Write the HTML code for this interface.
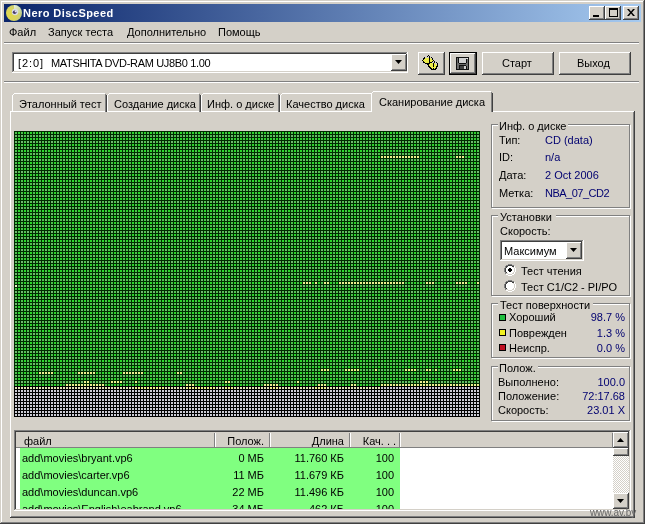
<!DOCTYPE html><html><head><meta charset="utf-8"><style>
html,body{margin:0;padding:0;}
body{width:645px;height:524px;position:relative;overflow:hidden;background:#D4D0C8;font-family:"Liberation Sans",sans-serif;font-size:11px;}
body>div,body>svg{position:absolute;}
.t{white-space:pre;line-height:13px;will-change:transform;}
</style></head><body>
<div style="left:0px;top:0px;width:645px;height:524px;background:#404040;"></div>
<div style="left:0px;top:0px;width:644px;height:523px;background:#D4D0C8;"></div>
<div style="left:1px;top:1px;width:643px;height:522px;background:#808080;"></div>
<div style="left:1px;top:1px;width:642px;height:521px;background:#fff;"></div>
<div style="left:2px;top:2px;width:641px;height:520px;background:#D4D0C8;"></div>
<div style="left:4px;top:4px;width:637px;height:18px;background:linear-gradient(to right,#0A246A,#A6CAF0);"></div>
<svg style="left:5px;top:4px" width="18" height="18" viewBox="0 0 18 18">
<defs><radialGradient id="dg" cx="0.3" cy="0.6" r="0.75"><stop offset="0" stop-color="#e0d848"/><stop offset="0.55" stop-color="#d8d460"/><stop offset="1" stop-color="#b8c890"/></radialGradient>
<linearGradient id="dh" x1="0" y1="0" x2="1" y2="1"><stop offset="0" stop-color="#f0f8f0" stop-opacity="0.9"/><stop offset="1" stop-color="#c8e0c8" stop-opacity="0.2"/></linearGradient></defs>
<circle cx="9" cy="9" r="8" fill="url(#dg)"/>
<path d="M9 1 A8 8 0 0 1 17 9 L12 9 A3 3 0 0 0 9 6 Z" fill="url(#dh)"/>
<circle cx="10" cy="8" r="3.2" fill="#d8dce8"/><circle cx="9.6" cy="8.2" r="1.8" fill="#4a3a68"/><circle cx="10.4" cy="7.6" r="0.8" fill="#e8e8f0"/>
</svg>
<div class="t" style="left:23px;top:7px;color:#fff;font-weight:bold;letter-spacing:0.45px;">Nero DiscSpeed</div>
<div style="left:589px;top:6px;width:16px;height:14px;background:#404040;"></div>
<div style="left:589px;top:6px;width:15px;height:13px;background:#fff;"></div>
<div style="left:590px;top:7px;width:14px;height:12px;background:#808080;"></div>
<div style="left:590px;top:7px;width:13px;height:11px;background:#D4D0C8;"></div>
<div style="left:605px;top:6px;width:16px;height:14px;background:#404040;"></div>
<div style="left:605px;top:6px;width:15px;height:13px;background:#fff;"></div>
<div style="left:606px;top:7px;width:14px;height:12px;background:#808080;"></div>
<div style="left:606px;top:7px;width:13px;height:11px;background:#D4D0C8;"></div>
<div style="left:623px;top:6px;width:16px;height:14px;background:#404040;"></div>
<div style="left:623px;top:6px;width:15px;height:13px;background:#fff;"></div>
<div style="left:624px;top:7px;width:14px;height:12px;background:#808080;"></div>
<div style="left:624px;top:7px;width:13px;height:11px;background:#D4D0C8;"></div>
<div style="left:593px;top:15px;width:6px;height:2px;background:#000;"></div>
<div style="left:609px;top:8px;width:9px;height:9px;background:transparent;border:1px solid #000;border-top-width:2px;box-sizing:border-box;"></div>
<svg style="left:627px;top:9px" width="8" height="7" viewBox="0 0 8 7"><path d="M0 0h2l2 2.5L6 0h2L5 3.5 8 7H6L4 4.5 2 7H0l3-3.5z" fill="#000"/></svg>
<div class="t" style="left:9px;top:26px;color:#000;">Файл</div>
<div class="t" style="left:48px;top:26px;color:#000;">Запуск теста</div>
<div class="t" style="left:127px;top:26px;color:#000;">Дополнительно</div>
<div class="t" style="left:218px;top:26px;color:#000;">Помощь</div>
<div style="left:4px;top:42px;width:635px;height:1px;background:#808080;"></div>
<div style="left:4px;top:43px;width:635px;height:1px;background:#fff;"></div>
<div style="left:12px;top:52px;width:396px;height:21px;background:#fff;"></div>
<div style="left:12px;top:52px;width:395px;height:20px;background:#808080;"></div>
<div style="left:13px;top:53px;width:394px;height:19px;background:#D4D0C8;"></div>
<div style="left:13px;top:53px;width:393px;height:18px;background:#404040;"></div>
<div style="left:14px;top:54px;width:392px;height:17px;background:#fff;"></div>
<div class="t" style="left:18px;top:57px;color:#000;letter-spacing:0.9px;">[2:0]</div>
<div class="t" style="left:51px;top:57px;color:#000;letter-spacing:-0.33px;">MATSHITA DVD-RAM UJ8B0 1.00</div>
<div style="left:391px;top:54px;width:16px;height:17px;background:#404040;"></div>
<div style="left:391px;top:54px;width:15px;height:16px;background:#fff;"></div>
<div style="left:392px;top:55px;width:14px;height:15px;background:#808080;"></div>
<div style="left:392px;top:55px;width:13px;height:14px;background:#D4D0C8;"></div>
<svg style="left:395px;top:60px" width="7" height="4"><path d="M0 0h7L3.5 4z" fill="#000"/></svg>
<div style="left:418px;top:52px;width:27px;height:23px;background:#404040;"></div>
<div style="left:418px;top:52px;width:26px;height:22px;background:#fff;"></div>
<div style="left:419px;top:53px;width:25px;height:21px;background:#808080;"></div>
<div style="left:419px;top:53px;width:24px;height:20px;background:#D4D0C8;"></div>
<svg style="left:422px;top:54px" width="18" height="17" shape-rendering="crispEdges"><rect x="6" y="1" width="1" height="1" fill="#000"/><rect x="5" y="2" width="1" height="1" fill="#000"/><rect x="7" y="2" width="1" height="1" fill="#000"/><rect x="2" y="3" width="1" height="1" fill="#000"/><rect x="7" y="3" width="1" height="1" fill="#000"/><rect x="9" y="3" width="1" height="1" fill="#000"/><rect x="1" y="4" width="2" height="1" fill="#000"/><rect x="3" y="4" width="4" height="1" fill="#ECEC48"/><rect x="7" y="4" width="1" height="1" fill="#000"/><rect x="8" y="4" width="1" height="1" fill="#ECEC48"/><rect x="10" y="4" width="1" height="1" fill="#000"/><rect x="1" y="5" width="1" height="1" fill="#000"/><rect x="2" y="5" width="5" height="1" fill="#ECEC48"/><rect x="7" y="5" width="1" height="1" fill="#000"/><rect x="8" y="5" width="2" height="1" fill="#ECEC48"/><rect x="10" y="5" width="1" height="1" fill="#000"/><rect x="0" y="6" width="1" height="1" fill="#000"/><rect x="1" y="6" width="6" height="1" fill="#ECEC48"/><rect x="7" y="6" width="1" height="1" fill="#000"/><rect x="8" y="6" width="3" height="1" fill="#ECEC48"/><rect x="11" y="6" width="1" height="1" fill="#000"/><rect x="1" y="7" width="1" height="1" fill="#000"/><rect x="2" y="7" width="5" height="1" fill="#ECEC48"/><rect x="7" y="7" width="1" height="1" fill="#000"/><rect x="8" y="7" width="2" height="1" fill="#ECEC48"/><rect x="10" y="7" width="1" height="1" fill="#000"/><rect x="12" y="7" width="1" height="1" fill="#000"/><rect x="1" y="8" width="2" height="1" fill="#000"/><rect x="3" y="8" width="4" height="1" fill="#ECEC48"/><rect x="7" y="8" width="3" height="1" fill="#000"/><rect x="12" y="8" width="1" height="1" fill="#000"/><rect x="14" y="8" width="1" height="1" fill="#000"/><rect x="3" y="9" width="5" height="1" fill="#000"/><rect x="8" y="9" width="3" height="1" fill="#ECEC48"/><rect x="11" y="9" width="1" height="1" fill="#000"/><rect x="12" y="9" width="1" height="1" fill="#ECEC48"/><rect x="15" y="9" width="1" height="1" fill="#000"/><rect x="5" y="10" width="2" height="1" fill="#000"/><rect x="7" y="10" width="4" height="1" fill="#ECEC48"/><rect x="11" y="10" width="1" height="1" fill="#000"/><rect x="12" y="10" width="2" height="1" fill="#ECEC48"/><rect x="15" y="10" width="1" height="1" fill="#000"/><rect x="6" y="11" width="1" height="1" fill="#000"/><rect x="7" y="11" width="4" height="1" fill="#ECEC48"/><rect x="11" y="11" width="1" height="1" fill="#000"/><rect x="12" y="11" width="3" height="1" fill="#ECEC48"/><rect x="15" y="11" width="1" height="1" fill="#000"/><rect x="6" y="12" width="2" height="1" fill="#000"/><rect x="8" y="12" width="3" height="1" fill="#ECEC48"/><rect x="11" y="12" width="1" height="1" fill="#000"/><rect x="12" y="12" width="2" height="1" fill="#ECEC48"/><rect x="14" y="12" width="2" height="1" fill="#000"/><rect x="7" y="13" width="2" height="1" fill="#000"/><rect x="9" y="13" width="5" height="1" fill="#ECEC48"/><rect x="14" y="13" width="1" height="1" fill="#000"/><rect x="8" y="14" width="2" height="1" fill="#000"/><rect x="10" y="14" width="1" height="1" fill="#ECEC48"/><rect x="11" y="14" width="1" height="1" fill="#000"/><rect x="12" y="14" width="1" height="1" fill="#ECEC48"/><rect x="13" y="14" width="2" height="1" fill="#000"/><rect x="9" y="15" width="5" height="1" fill="#000"/></svg>
<div style="left:449px;top:52px;width:28px;height:23px;background:#000;"></div>
<div style="left:450px;top:53px;width:26px;height:21px;background:#404040;"></div>
<div style="left:450px;top:53px;width:25px;height:20px;background:#fff;"></div>
<div style="left:451px;top:54px;width:24px;height:19px;background:#808080;"></div>
<div style="left:451px;top:54px;width:23px;height:18px;background:#D4D0C8;"></div>
<svg style="left:456px;top:57px" width="13" height="13" shape-rendering="crispEdges"><rect x="0" y="0" width="13" height="1" fill="#101010"/><rect x="0" y="1" width="1" height="1" fill="#101010"/><rect x="1" y="1" width="1" height="1" fill="#6c6c6c"/><rect x="2" y="1" width="1" height="1" fill="#101010"/><rect x="3" y="1" width="8" height="1" fill="#d0d0d0"/><rect x="11" y="1" width="1" height="1" fill="#f0f0f0"/><rect x="12" y="1" width="1" height="1" fill="#101010"/><rect x="0" y="2" width="1" height="1" fill="#101010"/><rect x="1" y="2" width="1" height="1" fill="#6c6c6c"/><rect x="2" y="2" width="1" height="1" fill="#101010"/><rect x="3" y="2" width="7" height="1" fill="#d0d0d0"/><rect x="10" y="2" width="1" height="1" fill="#101010"/><rect x="11" y="2" width="1" height="1" fill="#6c6c6c"/><rect x="12" y="2" width="1" height="1" fill="#101010"/><rect x="0" y="3" width="1" height="1" fill="#101010"/><rect x="1" y="3" width="1" height="1" fill="#6c6c6c"/><rect x="2" y="3" width="1" height="1" fill="#101010"/><rect x="3" y="3" width="7" height="1" fill="#d0d0d0"/><rect x="10" y="3" width="1" height="1" fill="#101010"/><rect x="11" y="3" width="1" height="1" fill="#6c6c6c"/><rect x="12" y="3" width="1" height="1" fill="#101010"/><rect x="0" y="4" width="1" height="1" fill="#101010"/><rect x="1" y="4" width="1" height="1" fill="#6c6c6c"/><rect x="2" y="4" width="1" height="1" fill="#101010"/><rect x="3" y="4" width="7" height="1" fill="#d0d0d0"/><rect x="10" y="4" width="1" height="1" fill="#101010"/><rect x="11" y="4" width="1" height="1" fill="#6c6c6c"/><rect x="12" y="4" width="1" height="1" fill="#101010"/><rect x="0" y="5" width="1" height="1" fill="#101010"/><rect x="1" y="5" width="1" height="1" fill="#6c6c6c"/><rect x="2" y="5" width="1" height="1" fill="#101010"/><rect x="3" y="5" width="7" height="1" fill="#d0d0d0"/><rect x="10" y="5" width="1" height="1" fill="#101010"/><rect x="11" y="5" width="1" height="1" fill="#6c6c6c"/><rect x="12" y="5" width="1" height="1" fill="#101010"/><rect x="0" y="6" width="1" height="1" fill="#101010"/><rect x="1" y="6" width="2" height="1" fill="#6c6c6c"/><rect x="3" y="6" width="7" height="1" fill="#101010"/><rect x="10" y="6" width="2" height="1" fill="#6c6c6c"/><rect x="12" y="6" width="1" height="1" fill="#101010"/><rect x="0" y="7" width="1" height="1" fill="#101010"/><rect x="1" y="7" width="11" height="1" fill="#6c6c6c"/><rect x="12" y="7" width="1" height="1" fill="#101010"/><rect x="0" y="8" width="1" height="1" fill="#101010"/><rect x="1" y="8" width="2" height="1" fill="#6c6c6c"/><rect x="3" y="8" width="7" height="1" fill="#101010"/><rect x="10" y="8" width="2" height="1" fill="#6c6c6c"/><rect x="12" y="8" width="1" height="1" fill="#101010"/><rect x="0" y="9" width="1" height="1" fill="#101010"/><rect x="1" y="9" width="2" height="1" fill="#6c6c6c"/><rect x="3" y="9" width="1" height="1" fill="#101010"/><rect x="4" y="9" width="4" height="1" fill="#404040"/><rect x="8" y="9" width="2" height="1" fill="#d0d0d0"/><rect x="10" y="9" width="1" height="1" fill="#101010"/><rect x="11" y="9" width="1" height="1" fill="#6c6c6c"/><rect x="12" y="9" width="1" height="1" fill="#101010"/><rect x="0" y="10" width="1" height="1" fill="#101010"/><rect x="1" y="10" width="2" height="1" fill="#6c6c6c"/><rect x="3" y="10" width="1" height="1" fill="#101010"/><rect x="4" y="10" width="4" height="1" fill="#404040"/><rect x="8" y="10" width="2" height="1" fill="#d0d0d0"/><rect x="10" y="10" width="1" height="1" fill="#101010"/><rect x="11" y="10" width="1" height="1" fill="#6c6c6c"/><rect x="12" y="10" width="1" height="1" fill="#101010"/><rect x="0" y="11" width="1" height="1" fill="#101010"/><rect x="1" y="11" width="2" height="1" fill="#6c6c6c"/><rect x="3" y="11" width="1" height="1" fill="#101010"/><rect x="4" y="11" width="4" height="1" fill="#404040"/><rect x="8" y="11" width="2" height="1" fill="#d0d0d0"/><rect x="10" y="11" width="1" height="1" fill="#101010"/><rect x="11" y="11" width="1" height="1" fill="#6c6c6c"/><rect x="12" y="11" width="1" height="1" fill="#101010"/><rect x="0" y="12" width="13" height="1" fill="#101010"/></svg>
<div style="left:482px;top:52px;width:72px;height:23px;background:#404040;"></div>
<div style="left:482px;top:52px;width:71px;height:22px;background:#fff;"></div>
<div style="left:483px;top:53px;width:70px;height:21px;background:#808080;"></div>
<div style="left:483px;top:53px;width:69px;height:20px;background:#D4D0C8;"></div>
<div class="t" style="left:502px;top:57px;color:#000;">Старт</div>
<div style="left:559px;top:52px;width:72px;height:23px;background:#404040;"></div>
<div style="left:559px;top:52px;width:71px;height:22px;background:#fff;"></div>
<div style="left:560px;top:53px;width:70px;height:21px;background:#808080;"></div>
<div style="left:560px;top:53px;width:69px;height:20px;background:#D4D0C8;"></div>
<div class="t" style="left:577px;top:57px;color:#000;">Выход</div>
<div style="left:4px;top:81px;width:635px;height:1px;background:#808080;"></div>
<div style="left:4px;top:82px;width:635px;height:1px;background:#fff;"></div>
<div style="left:10px;top:111px;width:625px;height:407px;background:#404040;"></div>
<div style="left:10px;top:111px;width:624px;height:406px;background:#fff;"></div>
<div style="left:11px;top:112px;width:623px;height:405px;background:#808080;"></div>
<div style="left:11px;top:112px;width:622px;height:404px;background:#D4D0C8;"></div>
<div style="left:12px;top:95px;width:1px;height:17px;background:#fff;"></div>
<div style="left:13px;top:94px;width:1px;height:1px;background:#fff;"></div>
<div style="left:14px;top:93px;width:91px;height:1px;background:#fff;"></div>
<div style="left:105px;top:94px;width:1px;height:18px;background:#808080;"></div>
<div style="left:106px;top:95px;width:1px;height:17px;background:#404040;"></div>
<div class="t" style="left:19px;top:98px;color:#000;">Эталонный тест</div>
<div style="left:107px;top:95px;width:1px;height:17px;background:#fff;"></div>
<div style="left:108px;top:94px;width:1px;height:1px;background:#fff;"></div>
<div style="left:109px;top:93px;width:90px;height:1px;background:#fff;"></div>
<div style="left:199px;top:94px;width:1px;height:18px;background:#808080;"></div>
<div style="left:200px;top:95px;width:1px;height:17px;background:#404040;"></div>
<div class="t" style="left:114px;top:98px;color:#000;">Создание диска</div>
<div style="left:201px;top:95px;width:1px;height:17px;background:#fff;"></div>
<div style="left:202px;top:94px;width:1px;height:1px;background:#fff;"></div>
<div style="left:203px;top:93px;width:75px;height:1px;background:#fff;"></div>
<div style="left:278px;top:94px;width:1px;height:18px;background:#808080;"></div>
<div style="left:279px;top:95px;width:1px;height:17px;background:#404040;"></div>
<div class="t" style="left:207px;top:98px;color:#000;">Инф. о диске</div>
<div style="left:280px;top:95px;width:1px;height:17px;background:#fff;"></div>
<div style="left:281px;top:94px;width:1px;height:1px;background:#fff;"></div>
<div style="left:282px;top:93px;width:89px;height:1px;background:#fff;"></div>
<div style="left:371px;top:94px;width:1px;height:18px;background:#808080;"></div>
<div style="left:372px;top:95px;width:1px;height:17px;background:#404040;"></div>
<div class="t" style="left:286px;top:98px;color:#000;">Качество диска</div>
<div style="left:371px;top:91px;width:122px;height:22px;background:#D4D0C8;"></div>
<div style="left:371px;top:93px;width:1px;height:19px;background:#fff;"></div>
<div style="left:372px;top:92px;width:1px;height:1px;background:#fff;"></div>
<div style="left:373px;top:91px;width:118px;height:1px;background:#fff;"></div>
<div style="left:491px;top:92px;width:1px;height:20px;background:#808080;"></div>
<div style="left:492px;top:93px;width:1px;height:19px;background:#404040;"></div>
<div class="t" style="left:379px;top:96px;color:#000;">Сканирование диска</div>
<svg style="left:14px;top:131px" width="466" height="286" viewBox="0 0 466 286" shape-rendering="crispEdges"><defs><pattern id="pg" x="0" y="0" width="6" height="6" patternUnits="userSpaceOnUse"><rect width="6" height="6" fill="#002c00"/><rect x="1" y="1" width="2" height="2" fill="#4CC24C"/><rect x="4" y="1" width="2" height="2" fill="#28D828"/><rect x="1" y="4" width="2" height="2" fill="#70B870"/><rect x="4" y="4" width="2" height="2" fill="#54C054"/></pattern><pattern id="pw" x="0" y="0" width="3" height="3" patternUnits="userSpaceOnUse"><rect width="3" height="3" fill="#000"/><rect x="1" y="1" width="2" height="2" fill="#CCCCD4"/></pattern></defs><rect width="466" height="286" fill="url(#pg)"/><rect x="0" y="255" width="466" height="31" fill="url(#pw)"/><rect x="1" y="256" width="2" height="2" fill="#E4E4B8"/><rect x="4" y="256" width="2" height="2" fill="#E4E4B8"/><rect x="7" y="256" width="2" height="2" fill="#E4E4B8"/><rect x="10" y="256" width="2" height="2" fill="#E4E4B8"/><rect x="13" y="256" width="2" height="2" fill="#E4E4B8"/><rect x="16" y="256" width="2" height="2" fill="#E4E4B8"/><rect x="19" y="256" width="2" height="2" fill="#E4E4B8"/><rect x="22" y="256" width="2" height="2" fill="#E4E4B8"/><rect x="25" y="256" width="2" height="2" fill="#E4E4B8"/><rect x="28" y="256" width="2" height="2" fill="#E4E4B8"/><rect x="31" y="256" width="2" height="2" fill="#E4E4B8"/><rect x="34" y="256" width="2" height="2" fill="#E4E4B8"/><rect x="37" y="256" width="2" height="2" fill="#E4E4B8"/><rect x="40" y="256" width="2" height="2" fill="#E4E4B8"/><rect x="43" y="256" width="2" height="2" fill="#E4E4B8"/><rect x="46" y="256" width="2" height="2" fill="#E4E4B8"/><rect x="49" y="256" width="2" height="2" fill="#E4E4B8"/><rect x="52" y="256" width="2" height="2" fill="#E4E4B8"/><rect x="55" y="256" width="2" height="2" fill="#E4E4B8"/><rect x="58" y="256" width="2" height="2" fill="#E4E4B8"/><rect x="61" y="256" width="2" height="2" fill="#E4E4B8"/><rect x="64" y="256" width="2" height="2" fill="#E4E4B8"/><rect x="67" y="256" width="2" height="2" fill="#E4E4B8"/><rect x="70" y="256" width="2" height="2" fill="#E4E4B8"/><rect x="73" y="256" width="2" height="2" fill="#E4E4B8"/><rect x="76" y="256" width="2" height="2" fill="#E4E4B8"/><rect x="79" y="256" width="2" height="2" fill="#E4E4B8"/><rect x="82" y="256" width="2" height="2" fill="#E4E4B8"/><rect x="85" y="256" width="2" height="2" fill="#E4E4B8"/><rect x="88" y="256" width="2" height="2" fill="#E4E4B8"/><rect x="91" y="256" width="2" height="2" fill="#E4E4B8"/><rect x="94" y="256" width="2" height="2" fill="#E4E4B8"/><rect x="97" y="256" width="2" height="2" fill="#E4E4B8"/><rect x="100" y="256" width="2" height="2" fill="#E4E4B8"/><rect x="103" y="256" width="2" height="2" fill="#E4E4B8"/><rect x="106" y="256" width="2" height="2" fill="#E4E4B8"/><rect x="109" y="256" width="2" height="2" fill="#E4E4B8"/><rect x="112" y="256" width="2" height="2" fill="#E4E4B8"/><rect x="115" y="256" width="2" height="2" fill="#E4E4B8"/><rect x="118" y="256" width="2" height="2" fill="#E4E4B8"/><rect x="121" y="256" width="2" height="2" fill="#E4E4B8"/><rect x="124" y="256" width="2" height="2" fill="#E4E4B8"/><rect x="127" y="256" width="2" height="2" fill="#E4E4B8"/><rect x="130" y="256" width="2" height="2" fill="#E4E4B8"/><rect x="133" y="256" width="2" height="2" fill="#E4E4B8"/><rect x="136" y="256" width="2" height="2" fill="#E4E4B8"/><rect x="139" y="256" width="2" height="2" fill="#E4E4B8"/><rect x="142" y="256" width="2" height="2" fill="#E4E4B8"/><rect x="145" y="256" width="2" height="2" fill="#E4E4B8"/><rect x="148" y="256" width="2" height="2" fill="#E4E4B8"/><rect x="151" y="256" width="2" height="2" fill="#E4E4B8"/><rect x="154" y="256" width="2" height="2" fill="#E4E4B8"/><rect x="157" y="256" width="2" height="2" fill="#E4E4B8"/><rect x="160" y="256" width="2" height="2" fill="#E4E4B8"/><rect x="163" y="256" width="2" height="2" fill="#E4E4B8"/><rect x="166" y="256" width="2" height="2" fill="#E4E4B8"/><rect x="169" y="256" width="2" height="2" fill="#E4E4B8"/><rect x="172" y="256" width="2" height="2" fill="#E4E4B8"/><rect x="175" y="256" width="2" height="2" fill="#E4E4B8"/><rect x="178" y="256" width="2" height="2" fill="#E4E4B8"/><rect x="181" y="256" width="2" height="2" fill="#E4E4B8"/><rect x="184" y="256" width="2" height="2" fill="#E4E4B8"/><rect x="187" y="256" width="2" height="2" fill="#E4E4B8"/><rect x="190" y="256" width="2" height="2" fill="#E4E4B8"/><rect x="193" y="256" width="2" height="2" fill="#E4E4B8"/><rect x="196" y="256" width="2" height="2" fill="#E4E4B8"/><rect x="199" y="256" width="2" height="2" fill="#E4E4B8"/><rect x="202" y="256" width="2" height="2" fill="#E4E4B8"/><rect x="205" y="256" width="2" height="2" fill="#E4E4B8"/><rect x="208" y="256" width="2" height="2" fill="#E4E4B8"/><rect x="211" y="256" width="2" height="2" fill="#E4E4B8"/><rect x="214" y="256" width="2" height="2" fill="#E4E4B8"/><rect x="217" y="256" width="2" height="2" fill="#E4E4B8"/><rect x="220" y="256" width="2" height="2" fill="#E4E4B8"/><rect x="223" y="256" width="2" height="2" fill="#E4E4B8"/><rect x="226" y="256" width="2" height="2" fill="#E4E4B8"/><rect x="229" y="256" width="2" height="2" fill="#E4E4B8"/><rect x="232" y="256" width="2" height="2" fill="#E4E4B8"/><rect x="235" y="256" width="2" height="2" fill="#E4E4B8"/><rect x="238" y="256" width="2" height="2" fill="#E4E4B8"/><rect x="241" y="256" width="2" height="2" fill="#E4E4B8"/><rect x="244" y="256" width="2" height="2" fill="#E4E4B8"/><rect x="247" y="256" width="2" height="2" fill="#E4E4B8"/><rect x="250" y="256" width="2" height="2" fill="#E4E4B8"/><rect x="253" y="256" width="2" height="2" fill="#E4E4B8"/><rect x="256" y="256" width="2" height="2" fill="#E4E4B8"/><rect x="259" y="256" width="2" height="2" fill="#E4E4B8"/><rect x="262" y="256" width="2" height="2" fill="#E4E4B8"/><rect x="265" y="256" width="2" height="2" fill="#E4E4B8"/><rect x="268" y="256" width="2" height="2" fill="#E4E4B8"/><rect x="271" y="256" width="2" height="2" fill="#E4E4B8"/><rect x="274" y="256" width="2" height="2" fill="#E4E4B8"/><rect x="277" y="256" width="2" height="2" fill="#E4E4B8"/><rect x="280" y="256" width="2" height="2" fill="#E4E4B8"/><rect x="283" y="256" width="2" height="2" fill="#E4E4B8"/><rect x="286" y="256" width="2" height="2" fill="#E4E4B8"/><rect x="289" y="256" width="2" height="2" fill="#E4E4B8"/><rect x="292" y="256" width="2" height="2" fill="#E4E4B8"/><rect x="295" y="256" width="2" height="2" fill="#E4E4B8"/><rect x="298" y="256" width="2" height="2" fill="#E4E4B8"/><rect x="301" y="256" width="2" height="2" fill="#E4E4B8"/><rect x="304" y="256" width="2" height="2" fill="#E4E4B8"/><rect x="307" y="256" width="2" height="2" fill="#E4E4B8"/><rect x="310" y="256" width="2" height="2" fill="#E4E4B8"/><rect x="313" y="256" width="2" height="2" fill="#E4E4B8"/><rect x="316" y="256" width="2" height="2" fill="#E4E4B8"/><rect x="319" y="256" width="2" height="2" fill="#E4E4B8"/><rect x="322" y="256" width="2" height="2" fill="#E4E4B8"/><rect x="325" y="256" width="2" height="2" fill="#E4E4B8"/><rect x="328" y="256" width="2" height="2" fill="#E4E4B8"/><rect x="331" y="256" width="2" height="2" fill="#E4E4B8"/><rect x="334" y="256" width="2" height="2" fill="#E4E4B8"/><rect x="337" y="256" width="2" height="2" fill="#E4E4B8"/><rect x="340" y="256" width="2" height="2" fill="#E4E4B8"/><rect x="343" y="256" width="2" height="2" fill="#E4E4B8"/><rect x="346" y="256" width="2" height="2" fill="#E4E4B8"/><rect x="349" y="256" width="2" height="2" fill="#E4E4B8"/><rect x="352" y="256" width="2" height="2" fill="#E4E4B8"/><rect x="355" y="256" width="2" height="2" fill="#E4E4B8"/><rect x="358" y="256" width="2" height="2" fill="#E4E4B8"/><rect x="361" y="256" width="2" height="2" fill="#E4E4B8"/><rect x="364" y="256" width="2" height="2" fill="#E4E4B8"/><rect x="367" y="25" width="2" height="2" fill="#F0F090"/><rect x="370" y="25" width="2" height="2" fill="#F0F090"/><rect x="373" y="25" width="2" height="2" fill="#F0F090"/><rect x="376" y="25" width="2" height="2" fill="#F0F090"/><rect x="379" y="25" width="2" height="2" fill="#F0F090"/><rect x="382" y="25" width="2" height="2" fill="#F0F090"/><rect x="385" y="25" width="2" height="2" fill="#F0F090"/><rect x="388" y="25" width="2" height="2" fill="#F0F090"/><rect x="391" y="25" width="2" height="2" fill="#F0F090"/><rect x="394" y="25" width="2" height="2" fill="#F0F090"/><rect x="397" y="25" width="2" height="2" fill="#F0F090"/><rect x="400" y="25" width="2" height="2" fill="#F0F090"/><rect x="403" y="25" width="2" height="2" fill="#F0F090"/><rect x="442" y="25" width="2" height="2" fill="#F0F090"/><rect x="445" y="25" width="2" height="2" fill="#F0F090"/><rect x="448" y="25" width="2" height="2" fill="#F0F090"/><rect x="289" y="151" width="2" height="2" fill="#F0F090"/><rect x="292" y="151" width="2" height="2" fill="#F0F090"/><rect x="295" y="151" width="2" height="2" fill="#F0F090"/><rect x="301" y="151" width="2" height="2" fill="#F0F090"/><rect x="310" y="151" width="2" height="2" fill="#F0F090"/><rect x="313" y="151" width="2" height="2" fill="#F0F090"/><rect x="325" y="151" width="2" height="2" fill="#F0F090"/><rect x="328" y="151" width="2" height="2" fill="#F0F090"/><rect x="331" y="151" width="2" height="2" fill="#F0F090"/><rect x="334" y="151" width="2" height="2" fill="#F0F090"/><rect x="337" y="151" width="2" height="2" fill="#F0F090"/><rect x="340" y="151" width="2" height="2" fill="#F0F090"/><rect x="343" y="151" width="2" height="2" fill="#F0F090"/><rect x="346" y="151" width="2" height="2" fill="#F0F090"/><rect x="349" y="151" width="2" height="2" fill="#F0F090"/><rect x="352" y="151" width="2" height="2" fill="#F0F090"/><rect x="355" y="151" width="2" height="2" fill="#F0F090"/><rect x="358" y="151" width="2" height="2" fill="#F0F090"/><rect x="361" y="151" width="2" height="2" fill="#F0F090"/><rect x="364" y="151" width="2" height="2" fill="#F0F090"/><rect x="367" y="151" width="2" height="2" fill="#F0F090"/><rect x="370" y="151" width="2" height="2" fill="#F0F090"/><rect x="373" y="151" width="2" height="2" fill="#F0F090"/><rect x="376" y="151" width="2" height="2" fill="#F0F090"/><rect x="379" y="151" width="2" height="2" fill="#F0F090"/><rect x="382" y="151" width="2" height="2" fill="#F0F090"/><rect x="385" y="151" width="2" height="2" fill="#F0F090"/><rect x="388" y="151" width="2" height="2" fill="#F0F090"/><rect x="412" y="151" width="2" height="2" fill="#F0F090"/><rect x="415" y="151" width="2" height="2" fill="#F0F090"/><rect x="418" y="151" width="2" height="2" fill="#F0F090"/><rect x="442" y="151" width="2" height="2" fill="#F0F090"/><rect x="445" y="151" width="2" height="2" fill="#F0F090"/><rect x="448" y="151" width="2" height="2" fill="#F0F090"/><rect x="451" y="151" width="2" height="2" fill="#F0F090"/><rect x="463" y="151" width="2" height="2" fill="#F0F090"/><rect x="1" y="154" width="2" height="2" fill="#F0F0D0"/><rect x="307" y="238" width="2" height="2" fill="#F0F090"/><rect x="310" y="238" width="2" height="2" fill="#F0F090"/><rect x="313" y="238" width="2" height="2" fill="#F0F090"/><rect x="331" y="238" width="2" height="2" fill="#F0F090"/><rect x="334" y="238" width="2" height="2" fill="#F0F090"/><rect x="337" y="238" width="2" height="2" fill="#F0F090"/><rect x="340" y="238" width="2" height="2" fill="#F0F090"/><rect x="343" y="238" width="2" height="2" fill="#F0F090"/><rect x="361" y="238" width="2" height="2" fill="#F0F090"/><rect x="391" y="238" width="2" height="2" fill="#F0F090"/><rect x="394" y="238" width="2" height="2" fill="#F0F090"/><rect x="397" y="238" width="2" height="2" fill="#F0F090"/><rect x="400" y="238" width="2" height="2" fill="#F0F090"/><rect x="412" y="238" width="2" height="2" fill="#F0F090"/><rect x="415" y="238" width="2" height="2" fill="#F0F090"/><rect x="421" y="238" width="2" height="2" fill="#F0F090"/><rect x="439" y="238" width="2" height="2" fill="#F0F090"/><rect x="442" y="238" width="2" height="2" fill="#F0F090"/><rect x="445" y="238" width="2" height="2" fill="#F0F090"/><rect x="25" y="241" width="2" height="2" fill="#F0F090"/><rect x="28" y="241" width="2" height="2" fill="#F0F090"/><rect x="31" y="241" width="2" height="2" fill="#F0F090"/><rect x="34" y="241" width="2" height="2" fill="#F0F090"/><rect x="37" y="241" width="2" height="2" fill="#F0F090"/><rect x="64" y="241" width="2" height="2" fill="#F0F090"/><rect x="67" y="241" width="2" height="2" fill="#F0F090"/><rect x="70" y="241" width="2" height="2" fill="#F0F090"/><rect x="73" y="241" width="2" height="2" fill="#F0F090"/><rect x="76" y="241" width="2" height="2" fill="#F0F090"/><rect x="79" y="241" width="2" height="2" fill="#F0F090"/><rect x="109" y="241" width="2" height="2" fill="#F0F090"/><rect x="112" y="241" width="2" height="2" fill="#F0F090"/><rect x="115" y="241" width="2" height="2" fill="#F0F090"/><rect x="118" y="241" width="2" height="2" fill="#F0F090"/><rect x="121" y="241" width="2" height="2" fill="#F0F090"/><rect x="124" y="241" width="2" height="2" fill="#F0F090"/><rect x="127" y="241" width="2" height="2" fill="#F0F090"/><rect x="163" y="241" width="2" height="2" fill="#F0F090"/><rect x="166" y="241" width="2" height="2" fill="#F0F090"/><rect x="70" y="250" width="2" height="2" fill="#F0F090"/><rect x="73" y="250" width="2" height="2" fill="#F0F090"/><rect x="97" y="250" width="2" height="2" fill="#F0F090"/><rect x="100" y="250" width="2" height="2" fill="#F0F090"/><rect x="103" y="250" width="2" height="2" fill="#F0F090"/><rect x="106" y="250" width="2" height="2" fill="#F0F090"/><rect x="121" y="250" width="2" height="2" fill="#F0F090"/><rect x="211" y="250" width="2" height="2" fill="#F0F090"/><rect x="214" y="250" width="2" height="2" fill="#F0F090"/><rect x="283" y="250" width="2" height="2" fill="#F0F090"/><rect x="406" y="250" width="2" height="2" fill="#F0F090"/><rect x="409" y="250" width="2" height="2" fill="#F0F090"/><rect x="412" y="250" width="2" height="2" fill="#F0F090"/><rect x="52" y="253" width="2" height="2" fill="#F0F090"/><rect x="55" y="253" width="2" height="2" fill="#F0F090"/><rect x="58" y="253" width="2" height="2" fill="#F0F090"/><rect x="61" y="253" width="2" height="2" fill="#F0F090"/><rect x="64" y="253" width="2" height="2" fill="#F0F090"/><rect x="67" y="253" width="2" height="2" fill="#F0F090"/><rect x="70" y="253" width="2" height="2" fill="#F0F090"/><rect x="73" y="253" width="2" height="2" fill="#F0F090"/><rect x="76" y="253" width="2" height="2" fill="#F0F090"/><rect x="79" y="253" width="2" height="2" fill="#F0F090"/><rect x="82" y="253" width="2" height="2" fill="#F0F090"/><rect x="85" y="253" width="2" height="2" fill="#F0F090"/><rect x="88" y="253" width="2" height="2" fill="#F0F090"/><rect x="172" y="253" width="2" height="2" fill="#F0F090"/><rect x="175" y="253" width="2" height="2" fill="#F0F090"/><rect x="178" y="253" width="2" height="2" fill="#F0F090"/><rect x="250" y="253" width="2" height="2" fill="#F0F090"/><rect x="253" y="253" width="2" height="2" fill="#F0F090"/><rect x="256" y="253" width="2" height="2" fill="#F0F090"/><rect x="259" y="253" width="2" height="2" fill="#F0F090"/><rect x="262" y="253" width="2" height="2" fill="#F0F090"/><rect x="304" y="253" width="2" height="2" fill="#F0F090"/><rect x="307" y="253" width="2" height="2" fill="#F0F090"/><rect x="310" y="253" width="2" height="2" fill="#F0F090"/><rect x="337" y="253" width="2" height="2" fill="#F0F090"/><rect x="340" y="253" width="2" height="2" fill="#F0F090"/><rect x="367" y="253" width="2" height="2" fill="#F0F090"/><rect x="370" y="253" width="2" height="2" fill="#F0F090"/><rect x="373" y="253" width="2" height="2" fill="#F0F090"/><rect x="376" y="253" width="2" height="2" fill="#F0F090"/><rect x="379" y="253" width="2" height="2" fill="#F0F090"/><rect x="382" y="253" width="2" height="2" fill="#F0F090"/><rect x="385" y="253" width="2" height="2" fill="#F0F090"/><rect x="388" y="253" width="2" height="2" fill="#F0F090"/><rect x="391" y="253" width="2" height="2" fill="#F0F090"/><rect x="394" y="253" width="2" height="2" fill="#F0F090"/><rect x="397" y="253" width="2" height="2" fill="#F0F090"/><rect x="400" y="253" width="2" height="2" fill="#F0F090"/><rect x="403" y="253" width="2" height="2" fill="#F0F090"/><rect x="406" y="253" width="2" height="2" fill="#F0F090"/><rect x="409" y="253" width="2" height="2" fill="#F0F090"/><rect x="412" y="253" width="2" height="2" fill="#F0F090"/><rect x="415" y="253" width="2" height="2" fill="#F0F090"/><rect x="418" y="253" width="2" height="2" fill="#F0F090"/><rect x="421" y="253" width="2" height="2" fill="#F0F090"/><rect x="424" y="253" width="2" height="2" fill="#F0F090"/><rect x="427" y="253" width="2" height="2" fill="#F0F090"/><rect x="430" y="253" width="2" height="2" fill="#F0F090"/><rect x="433" y="253" width="2" height="2" fill="#F0F090"/><rect x="436" y="253" width="2" height="2" fill="#F0F090"/><rect x="439" y="253" width="2" height="2" fill="#F0F090"/><rect x="442" y="253" width="2" height="2" fill="#F0F090"/><rect x="445" y="253" width="2" height="2" fill="#F0F090"/><rect x="448" y="253" width="2" height="2" fill="#F0F090"/><rect x="451" y="253" width="2" height="2" fill="#F0F090"/><rect x="454" y="253" width="2" height="2" fill="#F0F090"/><rect x="457" y="253" width="2" height="2" fill="#F0F090"/><rect x="460" y="253" width="2" height="2" fill="#F0F090"/><rect x="463" y="253" width="2" height="2" fill="#F0F090"/><rect x="121" y="256" width="2" height="2" fill="#F0F090"/><rect x="124" y="256" width="2" height="2" fill="#F0F090"/><rect x="127" y="256" width="2" height="2" fill="#F0F090"/><rect x="130" y="256" width="2" height="2" fill="#F0F090"/><rect x="133" y="256" width="2" height="2" fill="#F0F090"/><rect x="136" y="256" width="2" height="2" fill="#F0F090"/><rect x="139" y="256" width="2" height="2" fill="#F0F090"/><rect x="142" y="256" width="2" height="2" fill="#F0F090"/><rect x="145" y="256" width="2" height="2" fill="#F0F090"/><rect x="148" y="256" width="2" height="2" fill="#F0F090"/><rect x="172" y="256" width="2" height="2" fill="#F0F090"/><rect x="175" y="256" width="2" height="2" fill="#F0F090"/><rect x="178" y="256" width="2" height="2" fill="#F0F090"/><rect x="181" y="256" width="2" height="2" fill="#F0F090"/><rect x="184" y="256" width="2" height="2" fill="#F0F090"/><rect x="187" y="256" width="2" height="2" fill="#F0F090"/><rect x="190" y="256" width="2" height="2" fill="#F0F090"/><rect x="193" y="256" width="2" height="2" fill="#F0F090"/><rect x="196" y="256" width="2" height="2" fill="#F0F090"/><rect x="199" y="256" width="2" height="2" fill="#F0F090"/><rect x="211" y="256" width="2" height="2" fill="#F0F090"/><rect x="214" y="256" width="2" height="2" fill="#F0F090"/><rect x="217" y="256" width="2" height="2" fill="#F0F090"/><rect x="256" y="256" width="2" height="2" fill="#F0F090"/><rect x="259" y="256" width="2" height="2" fill="#F0F090"/><rect x="262" y="256" width="2" height="2" fill="#F0F090"/><rect x="301" y="256" width="2" height="2" fill="#F0F090"/><rect x="304" y="256" width="2" height="2" fill="#F0F090"/><rect x="307" y="256" width="2" height="2" fill="#F0F090"/><rect x="310" y="256" width="2" height="2" fill="#F0F090"/></svg>
<div style="left:492px;top:125px;width:139px;height:1px;background:#fff;"></div>
<div style="left:492px;top:208px;width:139px;height:1px;background:#fff;"></div>
<div style="left:492px;top:125px;width:1px;height:84px;background:#fff;"></div>
<div style="left:630px;top:125px;width:1px;height:84px;background:#fff;"></div>
<div style="left:491px;top:124px;width:139px;height:1px;background:#808080;"></div>
<div style="left:491px;top:207px;width:139px;height:1px;background:#808080;"></div>
<div style="left:491px;top:124px;width:1px;height:84px;background:#808080;"></div>
<div style="left:629px;top:124px;width:1px;height:84px;background:#808080;"></div>
<div style="left:498px;top:121px;width:70px;height:6px;background:#D4D0C8;"></div>
<div class="t" style="left:499px;top:120px;color:#000;">Инф. о диске</div>
<div class="t" style="left:499px;top:134px;color:#000;">Тип:</div>
<div class="t" style="left:545px;top:134px;color:#000070;">CD (data)</div>
<div class="t" style="left:499px;top:151px;color:#000;">ID:</div>
<div class="t" style="left:545px;top:151px;color:#000070;">n/a</div>
<div class="t" style="left:499px;top:169px;color:#000;">Дата:</div>
<div class="t" style="left:545px;top:169px;color:#000070;">2 Oct 2006</div>
<div class="t" style="left:499px;top:187px;color:#000;">Метка:</div>
<div class="t" style="left:545px;top:187px;color:#000070;letter-spacing:-0.5px;">NBA_07_CD2</div>
<div style="left:492px;top:216px;width:139px;height:1px;background:#fff;"></div>
<div style="left:492px;top:296px;width:139px;height:1px;background:#fff;"></div>
<div style="left:492px;top:216px;width:1px;height:81px;background:#fff;"></div>
<div style="left:630px;top:216px;width:1px;height:81px;background:#fff;"></div>
<div style="left:491px;top:215px;width:139px;height:1px;background:#808080;"></div>
<div style="left:491px;top:295px;width:139px;height:1px;background:#808080;"></div>
<div style="left:491px;top:215px;width:1px;height:81px;background:#808080;"></div>
<div style="left:629px;top:215px;width:1px;height:81px;background:#808080;"></div>
<div style="left:498px;top:212px;width:58px;height:6px;background:#D4D0C8;"></div>
<div class="t" style="left:500px;top:211px;color:#000;">Установки</div>
<div class="t" style="left:500px;top:225px;color:#000;">Скорость:</div>
<div style="left:500px;top:240px;width:84px;height:21px;background:#fff;"></div>
<div style="left:500px;top:240px;width:83px;height:20px;background:#808080;"></div>
<div style="left:501px;top:241px;width:82px;height:19px;background:#D4D0C8;"></div>
<div style="left:501px;top:241px;width:81px;height:18px;background:#404040;"></div>
<div style="left:502px;top:242px;width:80px;height:17px;background:#fff;"></div>
<div class="t" style="left:504px;top:245px;color:#000;">Максимум</div>
<div style="left:566px;top:242px;width:16px;height:17px;background:#404040;"></div>
<div style="left:566px;top:242px;width:15px;height:16px;background:#fff;"></div>
<div style="left:567px;top:243px;width:14px;height:15px;background:#808080;"></div>
<div style="left:567px;top:243px;width:13px;height:14px;background:#D4D0C8;"></div>
<svg style="left:570px;top:248px" width="7" height="4"><path d="M0 0h7L3.5 4z" fill="#000"/></svg>
<svg style="left:504px;top:264px" width="12" height="12" shape-rendering="crispEdges"><rect x="4" y="0" width="4" height="1" fill="#808080"/><rect x="2" y="1" width="2" height="1" fill="#808080"/><rect x="4" y="1" width="4" height="1" fill="#404040"/><rect x="8" y="1" width="2" height="1" fill="#808080"/><rect x="1" y="2" width="1" height="1" fill="#808080"/><rect x="2" y="2" width="2" height="1" fill="#404040"/><rect x="4" y="2" width="4" height="1" fill="#fff"/><rect x="8" y="2" width="2" height="1" fill="#404040"/><rect x="10" y="2" width="1" height="1" fill="#fff"/><rect x="1" y="3" width="1" height="1" fill="#808080"/><rect x="2" y="3" width="1" height="1" fill="#404040"/><rect x="3" y="3" width="6" height="1" fill="#fff"/><rect x="9" y="3" width="1" height="1" fill="#D4D0C8"/><rect x="10" y="3" width="1" height="1" fill="#fff"/><rect x="0" y="4" width="1" height="1" fill="#808080"/><rect x="1" y="4" width="1" height="1" fill="#404040"/><rect x="2" y="4" width="3" height="1" fill="#fff"/><rect x="5" y="4" width="2" height="1" fill="#000"/><rect x="7" y="4" width="3" height="1" fill="#fff"/><rect x="10" y="4" width="1" height="1" fill="#D4D0C8"/><rect x="11" y="4" width="1" height="1" fill="#fff"/><rect x="0" y="5" width="1" height="1" fill="#808080"/><rect x="1" y="5" width="1" height="1" fill="#404040"/><rect x="2" y="5" width="2" height="1" fill="#fff"/><rect x="4" y="5" width="4" height="1" fill="#000"/><rect x="8" y="5" width="2" height="1" fill="#fff"/><rect x="10" y="5" width="1" height="1" fill="#D4D0C8"/><rect x="11" y="5" width="1" height="1" fill="#fff"/><rect x="0" y="6" width="1" height="1" fill="#808080"/><rect x="1" y="6" width="1" height="1" fill="#404040"/><rect x="2" y="6" width="2" height="1" fill="#fff"/><rect x="4" y="6" width="4" height="1" fill="#000"/><rect x="8" y="6" width="2" height="1" fill="#fff"/><rect x="10" y="6" width="1" height="1" fill="#D4D0C8"/><rect x="11" y="6" width="1" height="1" fill="#fff"/><rect x="0" y="7" width="1" height="1" fill="#808080"/><rect x="1" y="7" width="1" height="1" fill="#404040"/><rect x="2" y="7" width="3" height="1" fill="#fff"/><rect x="5" y="7" width="2" height="1" fill="#000"/><rect x="7" y="7" width="3" height="1" fill="#fff"/><rect x="10" y="7" width="1" height="1" fill="#D4D0C8"/><rect x="11" y="7" width="1" height="1" fill="#fff"/><rect x="1" y="8" width="1" height="1" fill="#808080"/><rect x="2" y="8" width="1" height="1" fill="#404040"/><rect x="3" y="8" width="6" height="1" fill="#fff"/><rect x="9" y="8" width="1" height="1" fill="#D4D0C8"/><rect x="10" y="8" width="1" height="1" fill="#fff"/><rect x="1" y="9" width="1" height="1" fill="#808080"/><rect x="2" y="9" width="2" height="1" fill="#D4D0C8"/><rect x="4" y="9" width="4" height="1" fill="#fff"/><rect x="8" y="9" width="2" height="1" fill="#D4D0C8"/><rect x="10" y="9" width="1" height="1" fill="#fff"/><rect x="2" y="10" width="2" height="1" fill="#fff"/><rect x="4" y="10" width="4" height="1" fill="#D4D0C8"/><rect x="8" y="10" width="2" height="1" fill="#fff"/><rect x="4" y="11" width="4" height="1" fill="#fff"/></svg>
<svg style="left:504px;top:280px" width="12" height="12" shape-rendering="crispEdges"><rect x="4" y="0" width="4" height="1" fill="#808080"/><rect x="2" y="1" width="2" height="1" fill="#808080"/><rect x="4" y="1" width="4" height="1" fill="#404040"/><rect x="8" y="1" width="2" height="1" fill="#808080"/><rect x="1" y="2" width="1" height="1" fill="#808080"/><rect x="2" y="2" width="2" height="1" fill="#404040"/><rect x="4" y="2" width="4" height="1" fill="#fff"/><rect x="8" y="2" width="2" height="1" fill="#404040"/><rect x="10" y="2" width="1" height="1" fill="#fff"/><rect x="1" y="3" width="1" height="1" fill="#808080"/><rect x="2" y="3" width="1" height="1" fill="#404040"/><rect x="3" y="3" width="6" height="1" fill="#fff"/><rect x="9" y="3" width="1" height="1" fill="#D4D0C8"/><rect x="10" y="3" width="1" height="1" fill="#fff"/><rect x="0" y="4" width="1" height="1" fill="#808080"/><rect x="1" y="4" width="1" height="1" fill="#404040"/><rect x="2" y="4" width="8" height="1" fill="#fff"/><rect x="10" y="4" width="1" height="1" fill="#D4D0C8"/><rect x="11" y="4" width="1" height="1" fill="#fff"/><rect x="0" y="5" width="1" height="1" fill="#808080"/><rect x="1" y="5" width="1" height="1" fill="#404040"/><rect x="2" y="5" width="8" height="1" fill="#fff"/><rect x="10" y="5" width="1" height="1" fill="#D4D0C8"/><rect x="11" y="5" width="1" height="1" fill="#fff"/><rect x="0" y="6" width="1" height="1" fill="#808080"/><rect x="1" y="6" width="1" height="1" fill="#404040"/><rect x="2" y="6" width="8" height="1" fill="#fff"/><rect x="10" y="6" width="1" height="1" fill="#D4D0C8"/><rect x="11" y="6" width="1" height="1" fill="#fff"/><rect x="0" y="7" width="1" height="1" fill="#808080"/><rect x="1" y="7" width="1" height="1" fill="#404040"/><rect x="2" y="7" width="8" height="1" fill="#fff"/><rect x="10" y="7" width="1" height="1" fill="#D4D0C8"/><rect x="11" y="7" width="1" height="1" fill="#fff"/><rect x="1" y="8" width="1" height="1" fill="#808080"/><rect x="2" y="8" width="1" height="1" fill="#404040"/><rect x="3" y="8" width="6" height="1" fill="#fff"/><rect x="9" y="8" width="1" height="1" fill="#D4D0C8"/><rect x="10" y="8" width="1" height="1" fill="#fff"/><rect x="1" y="9" width="1" height="1" fill="#808080"/><rect x="2" y="9" width="2" height="1" fill="#D4D0C8"/><rect x="4" y="9" width="4" height="1" fill="#fff"/><rect x="8" y="9" width="2" height="1" fill="#D4D0C8"/><rect x="10" y="9" width="1" height="1" fill="#fff"/><rect x="2" y="10" width="2" height="1" fill="#fff"/><rect x="4" y="10" width="4" height="1" fill="#D4D0C8"/><rect x="8" y="10" width="2" height="1" fill="#fff"/><rect x="4" y="11" width="4" height="1" fill="#fff"/></svg>
<div class="t" style="left:521px;top:265px;color:#000;">Тест чтения</div>
<div class="t" style="left:521px;top:281px;color:#000;">Тест C1/C2 - PI/PO</div>
<div style="left:492px;top:304px;width:139px;height:1px;background:#fff;"></div>
<div style="left:492px;top:358px;width:139px;height:1px;background:#fff;"></div>
<div style="left:492px;top:304px;width:1px;height:55px;background:#fff;"></div>
<div style="left:630px;top:304px;width:1px;height:55px;background:#fff;"></div>
<div style="left:491px;top:303px;width:139px;height:1px;background:#808080;"></div>
<div style="left:491px;top:357px;width:139px;height:1px;background:#808080;"></div>
<div style="left:491px;top:303px;width:1px;height:55px;background:#808080;"></div>
<div style="left:629px;top:303px;width:1px;height:55px;background:#808080;"></div>
<div style="left:498px;top:300px;width:95px;height:6px;background:#D4D0C8;"></div>
<div class="t" style="left:500px;top:299px;color:#000;">Тест поверхности</div>
<div style="left:499px;top:314px;width:7px;height:7px;background:#000;"></div>
<div style="left:500px;top:315px;width:5px;height:5px;background:#20C040;"></div>
<div class="t" style="left:509px;top:311px;color:#000;">Хороший</div>
<div class="t" style="left:325px;width:300px;text-align:right;top:311px;color:#000070;">98.7 %</div>
<div style="left:499px;top:329px;width:7px;height:7px;background:#000;"></div>
<div style="left:500px;top:330px;width:5px;height:5px;background:#F0F020;"></div>
<div class="t" style="left:509px;top:327px;color:#000;">Поврежден</div>
<div class="t" style="left:325px;width:300px;text-align:right;top:327px;color:#000070;">1.3 %</div>
<div style="left:499px;top:344px;width:7px;height:7px;background:#000;"></div>
<div style="left:500px;top:345px;width:5px;height:5px;background:#C01020;"></div>
<div class="t" style="left:509px;top:342px;color:#000;">Неиспр.</div>
<div class="t" style="left:325px;width:300px;text-align:right;top:342px;color:#000070;">0.0 %</div>
<div style="left:492px;top:367px;width:139px;height:1px;background:#fff;"></div>
<div style="left:492px;top:421px;width:139px;height:1px;background:#fff;"></div>
<div style="left:492px;top:367px;width:1px;height:55px;background:#fff;"></div>
<div style="left:630px;top:367px;width:1px;height:55px;background:#fff;"></div>
<div style="left:491px;top:366px;width:139px;height:1px;background:#808080;"></div>
<div style="left:491px;top:420px;width:139px;height:1px;background:#808080;"></div>
<div style="left:491px;top:366px;width:1px;height:55px;background:#808080;"></div>
<div style="left:629px;top:366px;width:1px;height:55px;background:#808080;"></div>
<div style="left:498px;top:363px;width:40px;height:6px;background:#D4D0C8;"></div>
<div class="t" style="left:499px;top:362px;color:#000;">Полож.</div>
<div class="t" style="left:498px;top:376px;color:#000;">Выполнено:</div>
<div class="t" style="left:325px;width:300px;text-align:right;top:376px;color:#000070;">100.0</div>
<div class="t" style="left:498px;top:390px;color:#000;">Положение:</div>
<div class="t" style="left:325px;width:300px;text-align:right;top:390px;color:#000070;">72:17.68</div>
<div class="t" style="left:498px;top:404px;color:#000;">Скорость:</div>
<div class="t" style="left:325px;width:300px;text-align:right;top:404px;color:#000070;">23.01 X</div>
<div style="left:14px;top:430px;width:617px;height:81px;background:#fff;"></div>
<div style="left:14px;top:430px;width:616px;height:80px;background:#808080;"></div>
<div style="left:15px;top:431px;width:615px;height:79px;background:#D4D0C8;"></div>
<div style="left:15px;top:431px;width:614px;height:78px;background:#404040;"></div>
<div style="left:16px;top:432px;width:613px;height:77px;background:#fff;"></div>
<div style="left:16px;top:432px;width:199px;height:16px;background:#D4D0C8;"></div>
<div style="left:214px;top:433px;width:1px;height:14px;background:#808080;"></div>
<div style="left:16px;top:447px;width:199px;height:1px;background:#808080;"></div>
<div class="t" style="left:24px;top:435px;color:#000;">файл</div>
<div style="left:215px;top:432px;width:55px;height:16px;background:#D4D0C8;"></div>
<div style="left:215px;top:433px;width:1px;height:14px;background:#fff;"></div>
<div style="left:269px;top:433px;width:1px;height:14px;background:#808080;"></div>
<div style="left:215px;top:447px;width:55px;height:1px;background:#808080;"></div>
<div class="t" style="left:-36px;width:300px;text-align:right;top:435px;color:#000;">Полож.</div>
<div style="left:270px;top:432px;width:80px;height:16px;background:#D4D0C8;"></div>
<div style="left:270px;top:433px;width:1px;height:14px;background:#fff;"></div>
<div style="left:349px;top:433px;width:1px;height:14px;background:#808080;"></div>
<div style="left:270px;top:447px;width:80px;height:1px;background:#808080;"></div>
<div class="t" style="left:44px;width:300px;text-align:right;top:435px;color:#000;">Длина</div>
<div style="left:350px;top:432px;width:50px;height:16px;background:#D4D0C8;"></div>
<div style="left:350px;top:433px;width:1px;height:14px;background:#fff;"></div>
<div style="left:399px;top:433px;width:1px;height:14px;background:#808080;"></div>
<div style="left:350px;top:447px;width:50px;height:1px;background:#808080;"></div>
<div class="t" style="left:99px;width:300px;text-align:right;top:435px;color:#000;">Кач<span style="letter-spacing:3px">...</span></div>
<div style="left:400px;top:432px;width:213px;height:16px;background:#D4D0C8;"></div>
<div style="left:400px;top:433px;width:1px;height:14px;background:#fff;"></div>
<div style="left:612px;top:433px;width:1px;height:14px;background:#808080;"></div>
<div style="left:400px;top:447px;width:213px;height:1px;background:#808080;"></div>
<div style="left:20px;top:448px;width:380px;height:61px;background:#80FF80;"></div>
<div style="left:16px;top:448px;width:597px;height:61px;overflow:hidden;"><div class="t" style="position:absolute;left:6px;top:4px;">add\movies\bryant.vp6</div><div class="t" style="position:absolute;left:48px;width:200px;text-align:right;top:4px;">0 МБ</div><div class="t" style="position:absolute;left:128px;width:200px;text-align:right;top:4px;">11.760 КБ</div><div class="t" style="position:absolute;left:178px;width:200px;text-align:right;top:4px;">100</div><div class="t" style="position:absolute;left:6px;top:21px;">add\movies\carter.vp6</div><div class="t" style="position:absolute;left:48px;width:200px;text-align:right;top:21px;">11 МБ</div><div class="t" style="position:absolute;left:128px;width:200px;text-align:right;top:21px;">11.679 КБ</div><div class="t" style="position:absolute;left:178px;width:200px;text-align:right;top:21px;">100</div><div class="t" style="position:absolute;left:6px;top:38px;">add\movies\duncan.vp6</div><div class="t" style="position:absolute;left:48px;width:200px;text-align:right;top:38px;">22 МБ</div><div class="t" style="position:absolute;left:128px;width:200px;text-align:right;top:38px;">11.496 КБ</div><div class="t" style="position:absolute;left:178px;width:200px;text-align:right;top:38px;">100</div><div class="t" style="position:absolute;left:6px;top:55px;">add\movies\English\eabrand.vp6</div><div class="t" style="position:absolute;left:48px;width:200px;text-align:right;top:55px;">34 МБ</div><div class="t" style="position:absolute;left:128px;width:200px;text-align:right;top:55px;">462 КБ</div><div class="t" style="position:absolute;left:178px;width:200px;text-align:right;top:55px;">100</div></div>
<div style="left:613px;top:448px;width:16px;height:45px;background-color:#fff;background-image:repeating-conic-gradient(#D4D0C8 0 25%, #fff 0 50%);background-size:2px 2px;"></div>
<div style="left:613px;top:432px;width:16px;height:16px;background:#404040;"></div>
<div style="left:613px;top:432px;width:15px;height:15px;background:#fff;"></div>
<div style="left:614px;top:433px;width:14px;height:14px;background:#808080;"></div>
<div style="left:614px;top:433px;width:13px;height:13px;background:#D4D0C8;"></div>
<svg style="left:617px;top:438px" width="7" height="4"><path d="M3.5 0L7 4H0z" fill="#000"/></svg>
<div style="left:613px;top:448px;width:16px;height:8px;background:#404040;"></div>
<div style="left:613px;top:448px;width:15px;height:7px;background:#fff;"></div>
<div style="left:614px;top:449px;width:14px;height:6px;background:#808080;"></div>
<div style="left:614px;top:449px;width:13px;height:5px;background:#D4D0C8;"></div>
<div style="left:613px;top:493px;width:16px;height:16px;background:#404040;"></div>
<div style="left:613px;top:493px;width:15px;height:15px;background:#fff;"></div>
<div style="left:614px;top:494px;width:14px;height:14px;background:#808080;"></div>
<div style="left:614px;top:494px;width:13px;height:13px;background:#D4D0C8;"></div>
<svg style="left:617px;top:499px" width="7" height="4"><path d="M0 0h7L3.5 4z" fill="#000"/></svg>
<div style="left:590px;top:508px;font-size:10px;line-height:10px;letter-spacing:-0.1px;color:#686868;white-space:pre;will-change:transform;">www.av.by</div>
</body></html>
